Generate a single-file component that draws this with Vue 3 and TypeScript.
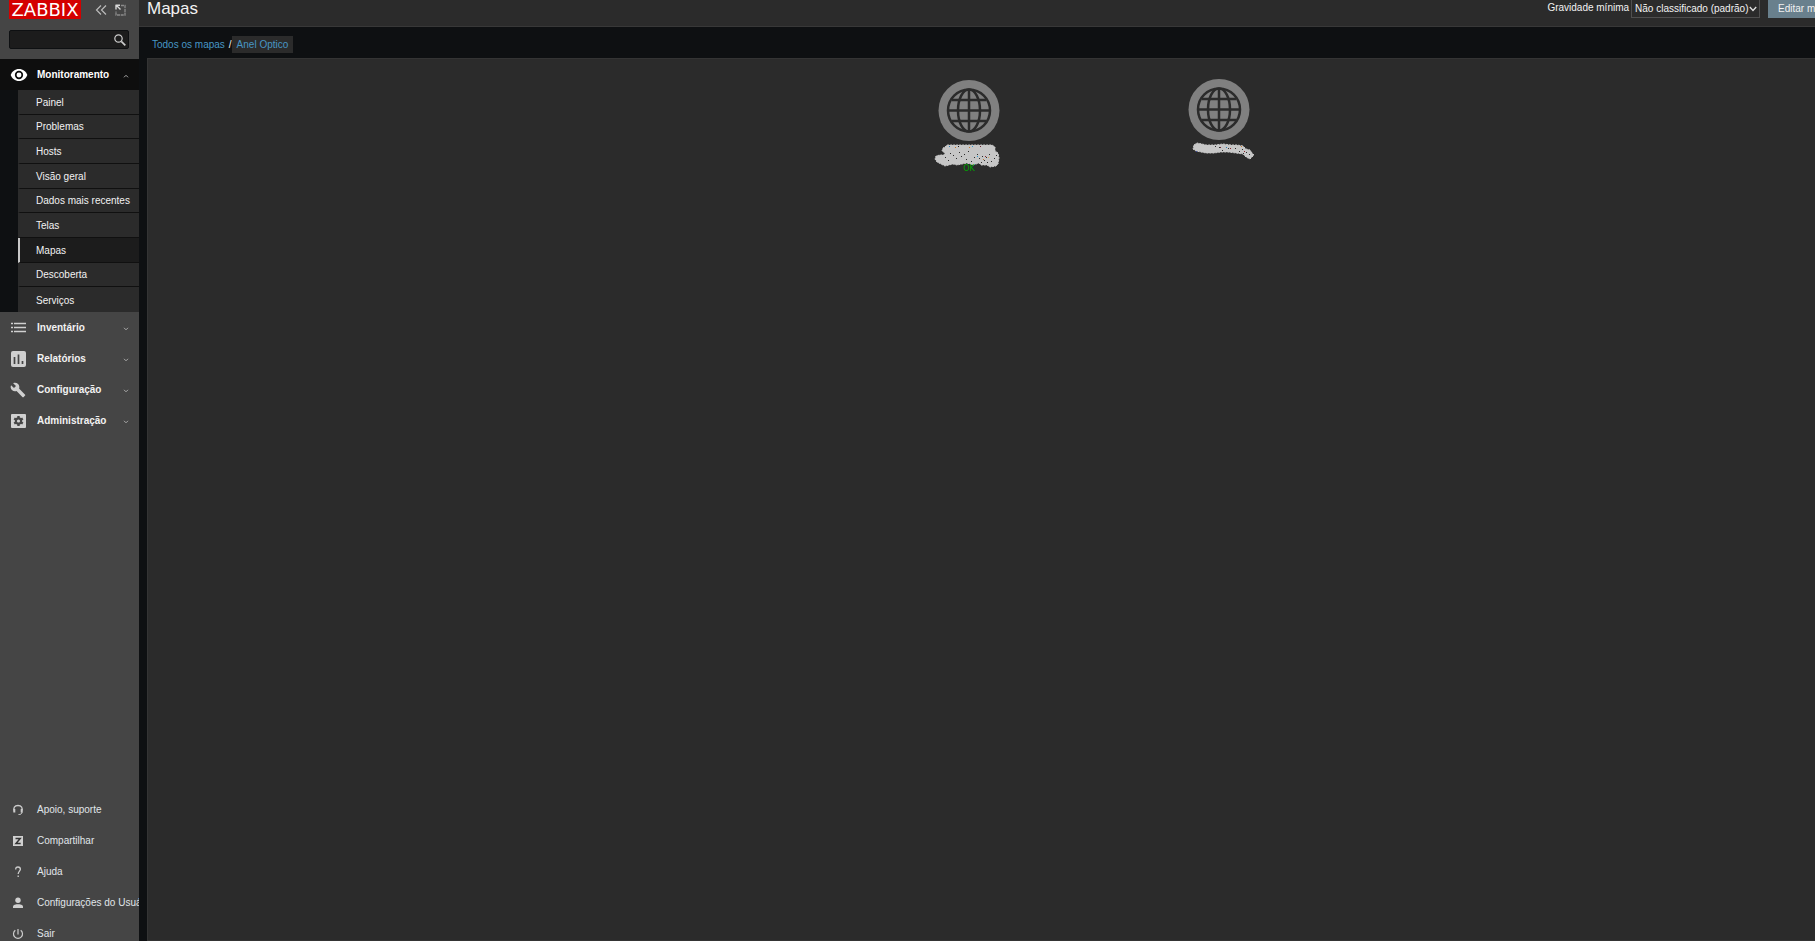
<script setup lang="ts">
import { ref } from 'vue'

interface Section {
  label: string
  icon: string
}

const query = ref('')
const severity = ref('0')

const views: string[] = [
  'Painel',
  'Problemas',
  'Hosts',
  'Visão geral',
  'Dados mais recentes',
  'Telas',
  'Mapas',
  'Descoberta',
  'Serviços',
]
const activeView = 'Mapas'

const sections: Section[] = [
  { label: 'Inventário', icon: 'list' },
  { label: 'Relatórios', icon: 'chart' },
  { label: 'Configuração', icon: 'wrench' },
  { label: 'Administração', icon: 'gear' },
]

const tools: Section[] = [
  { label: 'Apoio, suporte', icon: 'headset' },
  { label: 'Compartilhar', icon: 'share' },
  { label: 'Ajuda', icon: 'help' },
  { label: 'Configurações do Usuário', icon: 'user' },
  { label: 'Sair', icon: 'power' },
]

interface MapNode {
  id: string
  cls: string
  blot: string
  specks: number[][]
  tints: (number | string)[][]
  status: string
}

const nodes: MapNode[] = [
  {
    id: 'a',
    cls: 'node-a',
    blot: 'M10 2 12 0H57L60 2V6L63 8 64 13 63 19 61 21 55 22 52 20 46 20 44 18 38 20 32 18 22 20 18 19 10 21 6 19 2 17 0 14 1 11 5 10 9 10 10 8 7 6 8 3Z',
    specks: [
      [15, 8], [24, 7], [29, 9], [21, 13], [13, 15], [26, 11], [33, 6], [36, 16],
      [39, 12], [42, 9], [44, 13], [47, 11], [49, 15], [51, 12], [54, 9], [56, 16],
      [59, 13], [46, 17], [52, 17], [31, 14], [18, 10], [10, 12], [61, 10],
    ],
    tints: [
      [14, 1, '#2c7fb8'], [20, 2, '#c77b2c'], [23, 1, '#1b1b1b'], [34, 2, '#c77b2c'],
      [37, 1, '#2c9bd0'], [45, 1, '#6b2430'], [48, 14, '#c77b2c'], [42, 11, '#2c9bd0'],
      [53, 12, '#d9a75c'], [50, 11, '#8d2630'],
    ],
    status: 'OK',
  },
  {
    id: 'b',
    cls: 'node-b',
    blot: 'M1 2 4 0 9 1 13 2 22 2 30 1 38 2 44 2 50 3 53 6 57 7 59 10 61 12 60 13 57 16 53 14 50 11 43 10 35 9 28 9 21 10 13 10 8 9 3 8 0 6Z',
    specks: [[22, 3], [26, 4], [29, 7], [35, 5], [42, 5], [46, 8], [49, 6], [53, 9], [56, 11], [50, 10]],
    tints: [
      [27, 4, '#6b2430'], [33, 4, '#2c7fb8'], [37, 5, '#8d2630'],
      [48, 3, '#c77b2c'], [51, 8, '#8d2630'], [3, 8, '#3c4aa0'],
    ],
    status: '',
  },
]
</script>

<template>
  <div class="shell">
    <aside class="sidebar">
      <div class="brand">
        <a class="logo" href="#">ZABBIX</a>
        <button class="icon-btn" type="button" aria-label="Recolher menu">
          <svg width="12" height="12" viewBox="0 0 12 12" fill="none" stroke="currentColor" stroke-width="1.2">
            <path d="M6 1.500 1.500 6 6 10.500M11 1.500 6.500 6l4.500 4.500" />
          </svg>
        </button>
        <button class="icon-btn" type="button" aria-label="Ocultar menu">
          <svg width="11" height="12" viewBox="0 0 11 12" fill="none">
            <path d="M6 1.500h4v9.500H1V7" stroke="#8c8c8c" stroke-width="1.300" stroke-dasharray="3 .7" />
            <path d="M.5 1.200h4.500M1 1v4.500M1 1l4.500 4.500" stroke="#d8d8d8" stroke-width="1.400" />
          </svg>
        </button>
      </div>

      <form class="search" role="search" @submit.prevent>
        <input v-model="query" type="text" aria-label="Pesquisar" />
        <button type="submit" aria-label="Pesquisar">
          <svg width="12" height="12" viewBox="0 0 12 12" fill="none" stroke="#ccc">
            <circle cx="4.500" cy="4.500" r="3.700" stroke-width="1.200" />
            <path d="M7.300 7.300 11.300 11.300" stroke-width="1.700" />
          </svg>
        </button>
      </form>

      <nav class="menu">
        <a class="section section-open" href="#">
          <svg class="eye" width="18" height="14" viewBox="0 0 18 14">
            <path d="M9 1C5 1 2 3.500.7 7 2 10.500 5 13 9 13s7-2.500 8.300-6C16 3.500 13 1 9 1Z" fill="#fff" />
            <circle cx="9" cy="7" r="3.300" fill="none" stroke="#0e0e0e" stroke-width="1.700" />
          </svg>
          <span>Monitoramento</span>
          <svg class="chev" width="6" height="4" viewBox="0 0 6 4"><path d="M1 3.300 3 1.300l2 2" /></svg>
        </a>
        <ul class="views">
          <li v-for="v in views" :key="v">
            <a href="#" :class="{ active: v === activeView }">{{ v }}</a>
          </li>
        </ul>
        <a v-for="s in sections" :key="s.label" class="section" href="#">
          <svg v-if="s.icon === 'list'" class="glyph" width="16" height="16" viewBox="0 0 16 16" stroke="#d0d0d0">
            <path d="M1 3.500h2M1 7.500h2M1 11.500h2M4 3.500h12M4 7.500h12M4 11.500h12" stroke-width="1.300" />
          </svg>
          <svg v-else-if="s.icon === 'chart'" class="glyph" width="16" height="16" viewBox="0 0 16 16">
            <rect x="1" y="0" width="15" height="16" rx="2" fill="#d0d0d0" />
            <path d="M4.500 6v7M8.500 3.500V13M12.500 10v3" stroke="#454545" stroke-width="1.700" />
          </svg>
          <svg v-else-if="s.icon === 'wrench'" class="glyph" width="16" height="16" viewBox="0 0 24 24">
            <path d="M22.700 19l-9.100-9.100c.9-2.300.4-5-1.500-6.900-2-2-5-2.400-7.400-1.300L9 6 6 9 1.600 4.700C.4 7.100.9 10.100 2.900 12.100c1.900 1.900 4.600 2.400 6.900 1.500l9.100 9.100c.4.4 1 .4 1.400 0l2.300-2.300c.5-.4.5-1.100.1-1.400z" fill="#d0d0d0" />
          </svg>
          <svg v-else class="glyph" width="16" height="16" viewBox="0 0 16 16">
            <rect x="1" y="1" width="15" height="14" rx="1" fill="#d0d0d0" />
            <circle cx="8.500" cy="8" r="3.700" fill="#454545" />
            <path d="M8.500 3v10M4.200 5.500l8.600 5M12.800 5.500l-8.600 5" stroke="#454545" stroke-width="2.400" />
            <circle cx="8.500" cy="8" r="1.600" fill="#d0d0d0" />
          </svg>
          <span>{{ s.label }}</span>
          <svg class="chev" width="6" height="4" viewBox="0 0 6 4"><path d="M1 .8l2 2 2-2" /></svg>
        </a>
      </nav>

      <nav class="tools">
        <a v-for="t in tools" :key="t.label" href="#">
          <svg v-if="t.icon === 'headset'" width="12" height="12" viewBox="0 0 12 12" fill="none" stroke="#ccc">
            <path d="M2.500 7.500C.6 3.800 2.800 1.500 6 1.500s5.400 2.300 3.500 6" stroke-width="1.300" />
            <path d="M2.300 5v3.500M9.700 5v3.500" stroke-width="2" />
            <path d="M10 8c0 2-1.500 2.500-3.500 2.500" />
          </svg>
          <svg v-else-if="t.icon === 'share'" width="12" height="12" viewBox="0 0 12 12">
            <rect x="1" y="1" width="10" height="10" fill="#d0d0d0" />
            <path d="M3.500 3.500h4.700L4 8.500h4.700" fill="none" stroke="#333" stroke-width="1.500" />
          </svg>
          <svg v-else-if="t.icon === 'help'" width="12" height="12" viewBox="0 0 12 12" fill="none" stroke="#ccc" stroke-width="1.300">
            <path d="M3.700 3.500C3.700 1.800 4.700 1 6 1s2.400.8 2.400 2.300C8.400 5 6.200 5.300 6.200 8M6.200 9.500v1.500" />
          </svg>
          <svg v-else-if="t.icon === 'user'" width="12" height="12" viewBox="0 0 12 12" fill="#d0d0d0">
            <circle cx="6" cy="3.300" r="2.700" />
            <path d="M1 11V9.500C1 7.800 4 7.200 6 7.200s5 .6 5 2.300V11Z" />
          </svg>
          <svg v-else width="12" height="12" viewBox="0 0 12 12" fill="none" stroke="#ccc" stroke-width="1.200">
            <path d="M6 1v5.500M3.300 2.300a4.500 4.500 0 1 0 5.400 0" />
          </svg>
          <span>{{ t.label }}</span>
        </a>
      </nav>
    </aside>

    <main class="page">
      <header class="topbar">
        <h1>Mapas</h1>
        <div class="controls">
          <label for="severity">Gravidade mínima</label>
          <div class="select">
            <select id="severity" v-model="severity">
              <option value="0">Não classificado (padrão)</option>
            </select>
            <svg width="8" height="6" viewBox="0 0 8 6" fill="none" stroke="#e0e0e0" stroke-width="1.300">
              <path d="M.8 1 4 4.500 7.200 1" />
            </svg>
          </div>
          <button class="edit" type="button">Editar mapa</button>
        </div>
      </header>

      <nav class="crumbs">
        <a href="#">Todos os mapas</a>
        <span class="slash">/</span>
        <a class="current" href="#">Anel Optico</a>
      </nav>

      <section class="map">
        <div v-for="n in nodes" :key="n.id" class="node" :class="n.cls">
          <svg class="globe" width="62" height="62" viewBox="0 0 62 62" fill="none">
            <circle cx="31" cy="30.500" r="30.500" fill="#808080" />
            <g stroke="#2b2b2b" stroke-width="2.500">
              <circle cx="31" cy="30.500" r="21" />
              <ellipse cx="31" cy="30.500" rx="11" ry="21" />
              <path d="M31 9.500v42M10 30.500h42M14 20h34M14 41h34" />
            </g>
          </svg>
          <svg class="blot" width="65" height="23" viewBox="0 0 65 23">
            <path :d="n.blot" fill="#c6c6c6" stroke="#c6c6c6" stroke-dasharray="2 1" />
            <rect v-for="(p, i) in n.specks" :key="i" :x="p[0]" :y="p[1]" width="1" height="1" fill="#2b2b2b" />
            <rect v-for="(p, i) in n.tints" :key="'t' + i" :x="p[0]" :y="p[1]" width="1" height="1" :fill="String(p[2])" />
          </svg>
          <span v-if="n.status" class="status">{{ n.status }}</span>
        </div>
      </section>
    </main>
  </div>
</template>

<style>
body {
  background: #0e1012;
  overflow: hidden;
}
</style>

<style scoped>
* {
  box-sizing: border-box;
}
.shell {
  display: flex;
  height: 100vh;
  overflow: hidden;
  font: 10px/12px 'Liberation Sans', Arial, sans-serif;
  color: #f2f2f2;
}
a {
  color: inherit;
  text-decoration: none;
}
button,
input,
select {
  font: inherit;
  color: inherit;
  padding: 0;
  margin: 0;
  border: 0;
  background: none;
  outline: 0;
}
.sidebar {
  flex: 0 0 139px;
  display: flex;
  flex-direction: column;
  overflow: hidden;
  background: #454545;
}
.brand {
  display: flex;
  align-items: center;
  height: 19px;
  padding-left: 9px;
}
.logo {
  width: 72px;
  height: 19px;
  margin-right: 14px;
  background: #d40000;
  color: #fff;
  font: 18px/19px 'DejaVu Sans', sans-serif;
  text-align: center;
}
.icon-btn {
  display: flex;
  margin-right: 8px;
  color: #bbb;
}
.search {
  display: flex;
  align-items: center;
  height: 19px;
  margin: 11px 10px 10px 9px;
  padding-right: 2px;
  background: #1c1c1c;
  border: 1px solid #0e1012;
  border-radius: 2px;
}
.search input {
  flex: 1;
  min-width: 0;
  height: 17px;
  padding-left: 4px;
}
.search button {
  display: flex;
}
.section {
  display: flex;
  align-items: center;
  height: 31px;
  padding: 0 10px;
  font-weight: bold;
}
.section span {
  flex: 1;
  margin-left: 10px;
}
.glyph {
  margin-right: 1px;
}
.section-open {
  background: #0e0e0e;
  color: #fff;
}
.section-open .eye {
  margin-right: -1px;
}
.chev {
  fill: none;
  stroke: #aaa;
  margin-top: 2px;
}
.views {
  display: grid;
  grid-auto-rows: 1fr;
  height: 222px;
  margin: 0;
  padding: 0 0 0 18px;
  list-style: none;
  background: #0e1012;
}
.views li {
  display: flex;
}
.views a {
  flex: 1;
  display: flex;
  align-items: center;
  padding: 2px 0 0 16px;
  background: #2b2b2b;
  border-left: 2px solid #2b2b2b;
  border-bottom: 1px solid #101010;
  white-space: nowrap;
}
.views li:last-child a {
  border-bottom: 0;
}
.views .active {
  background: #1c1c1c;
  border-left-color: #c8c8c8;
}
.tools {
  margin-top: auto;
  margin-bottom: -8px;
}
.tools a {
  display: flex;
  align-items: center;
  gap: 13px;
  height: 31px;
  padding-left: 12px;
  color: #e0e6ea;
  white-space: nowrap;
}
.tools svg {
  flex: none;
}
.page {
  flex: 1;
  min-width: 0;
  display: flex;
  flex-direction: column;
}
.topbar {
  display: flex;
  justify-content: space-between;
  height: 27px;
  padding-left: 8px;
  background: #2b2b2b;
  border-bottom: 1px solid #383838;
  overflow: hidden;
}
h1 {
  margin: 0;
  font-size: 17px;
  line-height: 17px;
  font-weight: normal;
}
.controls {
  display: flex;
  align-items: flex-start;
  white-space: nowrap;
  margin-right: -27px;
}
.controls label {
  line-height: 16px;
  margin-right: 2px;
}
.select {
  display: flex;
  align-items: center;
  width: 129px;
  height: 18px;
  padding-right: 2px;
  border: 1px solid #4f4f4f;
  border-top: 0;
}
.select select {
  flex: 1;
  min-width: 0;
  height: 17px;
  padding-left: 3px;
  appearance: none;
  background: #2b2b2b;
}
.edit {
  height: 18px;
  margin-left: 8px;
  padding: 0 10px;
  background: #69808d;
}
.crumbs {
  display: flex;
  align-items: center;
  height: 31px;
  padding: 4px 0 0 13px;
  color: #4796c4;
}
.crumbs .slash {
  margin-left: 4px;
  color: #f2f2f2;
}
.crumbs .current {
  padding: 3px 5px 2px;
  background: #2b2b2b;
}
.map {
  position: relative;
  flex: 1;
  margin-left: 8px;
  background: #2b2b2b;
  border: 1px solid #343434;
  border-right: 0;
}
.node {
  position: absolute;
  width: 66px;
  display: flex;
  flex-direction: column;
  align-items: center;
}
.node-a {
  left: 788px;
  top: 21px;
}
.node-b {
  left: 1038px;
  top: 20px;
}
.blot {
  flex: none;
  margin-top: 3px;
  overflow: visible;
}
.node-a .blot {
  margin-right: 4px;
}
.node-b .blot {
  margin: 2px 0 0 7px;
  align-self: flex-start;
}
.status {
  position: relative;
  margin-top: -4px;
  color: #00a000;
  font: 8px/10px 'DejaVu Sans', sans-serif;
}
</style>
